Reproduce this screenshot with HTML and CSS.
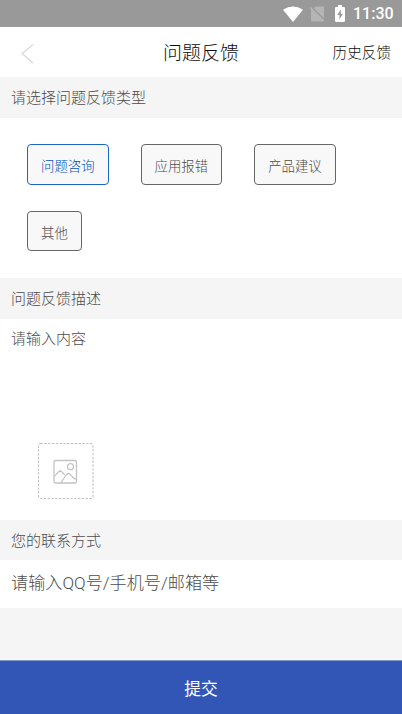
FILE: index.html
```html
<!DOCTYPE html>
<html lang="zh-CN">
<head>
<meta charset="utf-8">
<title>问题反馈</title>
<link rel="stylesheet" href="styles.css">
</head>
<body>
<div class="status">
  <svg class="wifi" width="20" height="16" viewBox="0 0 20 16"><path d="M0 3.7Q10-2.7 20 3.7L10 16Z" fill="#fff"/></svg>
  <svg class="sim" width="15" height="16" viewBox="0 0 15 16"><path d="M5.5 .5H13a1 1 0 0 1 1 1V12.2L3.8 2.2ZM.8 1 14.4 14.6 13.4 15.6H2a1 1 0 0 1-1-1V3.4L0 2Z" fill="#b5b5b5"/></svg>
  <svg class="battery" width="10" height="17" viewBox="0 0 10 17"><path d="M3 0H7V2H9a1 1 0 0 1 1 1V16a1 1 0 0 1-1 1H1a1 1 0 0 1-1-1V3a1 1 0 0 1 1-1H3Z" fill="#fff"/><path d="M5.8 4.4 2.2 10H4.4V14.5L8 8.8H5.8Z" fill="#999"/></svg>
  <span class="clock">11:30</span>
</div>
<header class="navbar">
  <svg class="back" width="14" height="22" viewBox="0 0 14 22"><path d="M12 1.5 1.2 10.5 12 20" fill="none" stroke="#dcdcdc" stroke-width="1.5"/></svg>
  <h1 class="title">问题反馈</h1>
  <a class="history">历史反馈</a>
</header>
<main>
  <h2 class="label">请选择问题反馈类型</h2>
  <div class="types">
    <button class="chip active">问题咨询</button>
    <button class="chip">应用报错</button>
    <button class="chip">产品建议</button>
    <button class="chip short">其他</button>
  </div>
  <h2 class="label describe">问题反馈描述</h2>
  <section class="content">
    <p class="hint">请输入内容</p>
    <div class="upload">
      <svg width="56" height="56" viewBox="0 0 56 56" fill="none" stroke="#c2c2c2">
        <rect x=".5" y=".5" width="54.5" height="55" rx="2" stroke-width="1.1" stroke-dasharray="2.4 1.4"/>
        <rect x="16" y="17.5" width="22.5" height="22.5" rx="1.5" stroke-width="1.3"/>
        <circle cx="32.5" cy="23.7" r="3" stroke-width="1.2"/>
        <path d="M16.5 33.2 20.7 28.7Q22.2 27.3 23.7 28.7L26.7 32M23 39.5 28.8 31.2Q30.3 29.8 31.8 31.2L35.5 35Q36.7 36.2 38.5 36.2" stroke-width="1.2"/>
      </svg>
    </div>
  </section>
  <h2 class="label contact-label">您的联系方式</h2>
  <p class="contact">请输入QQ号/手机号/邮箱等</p>
</main>
<button class="submit">提交</button>
</body>
</html>
```
FILE: styles.css
```css
* { box-sizing: border-box; margin: 0; padding: 0; }
body {
  display: flex;
  flex-direction: column;
  height: 714px;
  overflow: hidden;
  background: #f5f5f5;
  color: #4c4c4c;
  font-family: Roboto, "Noto Sans CJK SC", sans-serif;
  font-weight: 300;
}
button { font: inherit; color: inherit; }
.status {
  display: flex;
  align-items: center;
  justify-content: flex-end;
  height: 27px;
  padding-right: 9px;
  background: #999;
}
.sim { margin-left: 7px; }
.battery { margin-left: 10px; }
.clock {
  width: 40px;
  margin-left: 8px;
  color: #fff;
  font-size: 16px;
  font-weight: 500;
  line-height: 28px;
}
.navbar {
  display: grid;
  grid-template-columns: 1fr auto 1fr;
  align-items: center;
  height: 50px;
  padding: 0 11px 0 21px;
  background: #fff;
  color: #0c0c0c;
}
.back { margin-top: 3px; }
.title { margin-left: -10px; padding-top: 3px; font-size: 19px; font-weight: inherit; line-height: 48px; }
.history { justify-self: end; font-size: 14.6px; line-height: 50px; }
.label {
  height: 41px;
  padding: 1px 0 0 11px;
  background: #f5f5f5;
  font-size: 15px;
  font-weight: inherit;
  line-height: 41px;
}
.types {
  display: flex;
  flex-wrap: wrap;
  align-content: flex-start;
  gap: 26px 32px;
  height: 160px;
  padding: 26px 27px 0;
  background: #fff;
}
.chip {
  height: 41px;
  padding: 1px 13px 0;
  border: 1px solid #666;
  border-radius: 4px;
  background: #f8f8f8;
  font-size: 13.4px;
}
.chip.short { height: 40px; }
.chip.active { border-color: #1b66c4; color: #0050bc; }
.content { height: 201px; background: #fff; }
.hint { padding-left: 11px; font-size: 15px; line-height: 41px; }
.upload { margin: 83px 0 0 38px; }
.upload svg { display: block; }
.contact-label { height: 40px; line-height: 40px; }
.contact {
  height: 48px;
  padding-left: 11px;
  background: #fff;
  font-size: 17.15px;
  line-height: 47px;
}
.submit {
  height: 54px;
  margin-top: auto;
  border: 0;
  border-top: 1px solid #8298cf;
  background: #3156b5;
  color: #fff;
  font-size: 16.8px;
  font-weight: 400;
}
```
